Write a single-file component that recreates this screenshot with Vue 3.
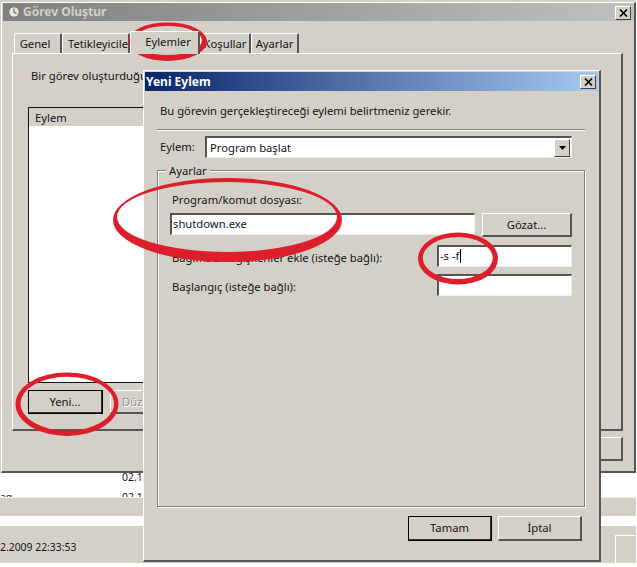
<script setup>
const tabs = [
  { label: 'Genel', cls: 'w-genel' },
  { label: 'Tetikleyiciler', cls: 'w-tetik' },
  { label: 'Eylemler', cls: 'w-eylem active' },
  { label: 'Koşullar', cls: 'w-kosul' },
  { label: 'Ayarlar', cls: 'w-ayar' }
]

const ring = ([cx, cy, rx, ry]) =>
  `M${cx - rx} ${cy}a${rx} ${ry} 0 1 0 ${2 * rx} 0a${rx} ${ry} 0 1 0 ${-2 * rx} 0Z`

// hand-drawn marks: outer and inner ellipse, slightly off-centre for an uneven stroke
const marks = [
  [[167.5, 41.7, 39.5, 19.3], [167.5, 40.5, 34.5, 14.5]],
  [[227.5, 220, 114.5, 42], [227, 217, 110, 35]],
  [[458, 258.5, 40, 26], [457.7, 258, 35, 21]],
  [[67, 404.2, 51.5, 31.8], [67.3, 403.7, 46.7, 27]]
].map(([outer, inner]) => ring(outer) + ring(inner))
</script>

<template>
  <div class="page">
    <div class="screen">
      <!-- application behind the windows -->
      <div class="back">
        <div class="rows">
          <div class="row"><span class="cell-name"></span><span class="cell-date">02.12.2009</span></div>
          <div class="row"><span class="cell-name">ag</span><span class="cell-date">02.12.2009</span></div>
        </div>
        <div class="strip"></div>
        <div class="whitebar"></div>
        <div class="status">
          <span class="stamp">2.2009 22:33:53</span>
          <div class="corner-btn"></div>
        </div>
      </div>

      <!-- Görev Oluştur window -->
      <section class="win outer">
        <header class="title grey">
          <svg class="clock" width="12" height="12" viewBox="0 0 12 12">
            <circle cx="6" cy="6" r="5.2" fill="#e9e6dc" stroke="#77756d" stroke-width="1" />
            <path d="M6 2.6V6.2L8.6 7.6" fill="none" stroke="#7a6a3a" stroke-width="1.2" />
          </svg>
          <span class="title-text dim">Görev Oluştur</span>
          <span class="x-btn outer-x">
            <svg width="9" height="8" viewBox="0 0 9 8"><path d="M1 0.5L8 7.5M8 0.5L1 7.5" stroke="#000" stroke-width="1.6" /></svg>
          </span>
        </header>
        <nav class="tabs">
          <span v-for="t in tabs" :key="t.label" class="tab" :class="t.cls">{{ t.label }}</span>
        </nav>
        <div class="panel">
          <p class="panel-text">Bir görev oluşturduğunuzda</p>
          <div class="list">
            <div class="list-head">Eylem</div>
          </div>
          <div class="list-btns">
            <span class="btn default yeni">Yeni...</span>
            <span class="btn duz">Düz</span>
          </div>
        </div>
        <div class="outer-foot">
          <span class="btn outer-cancel"></span>
        </div>
      </section>

      <!-- Yeni Eylem dialog -->
      <section class="win dialog">
        <header class="title blue">
          <span class="title-text">Yeni Eylem</span>
          <span class="x-btn">
            <svg width="9" height="8" viewBox="0 0 9 8"><path d="M1 0.5L8 7.5M8 0.5L1 7.5" stroke="#000" stroke-width="1.6" /></svg>
          </span>
        </header>
        <p class="intro">Bu görevin gerçekleştireceği eylemi belirtmeniz gerekir.</p>
        <div class="sep"></div>
        <div class="action-row">
          <span class="action-label">Eylem:</span>
          <div class="combo">
            <span class="combo-text">Program başlat</span>
            <span class="combo-arrow">
              <svg width="7" height="4" viewBox="0 0 7 4"><path d="M0 0H7L3.5 4Z" fill="#000" /></svg>
            </span>
          </div>
        </div>
        <div class="group">
          <span class="legend">Ayarlar</span>
          <div class="lbl lbl-program">Program/komut dosyası:</div>
          <div class="program-row">
            <div class="input program-input">shutdown.exe</div>
            <span class="btn gozat">Gözat...</span>
          </div>
          <div class="opt-row first">
            <span class="lbl">Bağımsız değişkenler ekle (isteğe bağlı):</span>
            <div class="input opt-input">-s -f<i class="caret"></i></div>
          </div>
          <div class="opt-row second">
            <span class="lbl">Başlangıç (isteğe bağlı):</span>
            <div class="input opt-input"></div>
          </div>
        </div>
        <div class="dialog-foot">
          <span class="btn default foot-btn">Tamam</span>
          <span class="btn foot-btn">İptal</span>
        </div>
      </section>

      <!-- hand-drawn red marks -->
      <svg class="marks" width="636" height="563" viewBox="0 0 636 563">
        <path v-for="(d, i) in marks" :key="i" :d="d" fill="#dc1f2b" fill-rule="evenodd" />
      </svg>
    </div>
  </div>
</template>

<style scoped>
.page {
  width: 637px;
  height: 567px;
  background: #fff;
  overflow: hidden;
  font-family: "Noto Sans", "Liberation Sans", sans-serif;
  font-size: 11.25px;
  line-height: 16px;
  color: #141414;
}
.screen {
  position: relative;
  width: 636px;
  height: 563px;
  background: #d4d0c8;
  overflow: hidden;
}

/* background application */
.back {
  display: flex;
  flex-direction: column;
  height: 100%;
  padding-top: 473px;
  box-sizing: border-box;
}
.rows {
  height: 24px;
  background: #fff;
  overflow: hidden;
  font-size: 10.4px;
}
.row {
  display: flex;
  height: 20px;
}
.row:first-child {
  margin-top: -4px;
}
.cell-name {
  width: 122px;
}
.cell-date {
  white-space: nowrap;
}
.strip {
  height: 18px;
  border-top: 1px solid #f4f2ee;
}
.whitebar {
  height: 10px;
  background: #fff;
}
.status {
  flex: 1;
  display: flex;
  justify-content: space-between;
}
.stamp {
  margin-top: 13px;
  font-size: 10.4px;
}
.corner-btn {
  width: 20px;
  margin-top: 9px;
  border-top: 1px solid #fff;
  border-left: 1px solid #fff;
}

/* window chrome */
.win {
  position: absolute;
  box-sizing: border-box;
  display: flex;
  flex-direction: column;
  background: #d4d0c8;
  border-top: 1px solid #fff;
  border-left: 1px solid #fff;
  border-right: 2px solid #555;
  border-bottom: 2px solid #555;
}
.outer {
  left: 1px;
  top: 2px;
  width: 635px;
  height: 471px;
  padding: 0 0 0 1px;
}
.dialog {
  left: 143px;
  top: 70px;
  width: 458px;
  height: 492px;
  padding: 1px 1px 0;
}
.title {
  display: flex;
  align-items: center;
  flex: none;
  height: 18px;
  padding: 0 3px 0 1px;
}
.grey {
  background: linear-gradient(90deg, #808080, #c0c0c0);
  padding-left: 5px;
  padding-right: 3px;
}
.blue {
  height: 19px;
  background: linear-gradient(90deg, #0a246a, #a6caf0);
  padding-right: 2px;
}
.title-text {
  flex: 1;
  font-weight: 700;
  color: #fff;
  font-size: 12px;
}
.title-text.dim {
  color: #d4d0c8;
  margin-left: 3px;
}
.x-btn {
  flex: none;
  display: flex;
  align-items: center;
  justify-content: center;
  width: 16px;
  height: 14px;
  background: #d4d0c8;
  box-sizing: border-box;
  border-top: 1px solid #fff;
  border-left: 1px solid #fff;
  border-right: 1px solid #404040;
  border-bottom: 1px solid #404040;
}
.outer-x {
  margin-top: 1px;
}

/* tabs */
.tabs {
  display: flex;
  align-items: flex-end;
  height: 32px;
  padding-left: 11px;
  flex: none;
}
.tab {
  box-sizing: border-box;
  height: 20px;
  line-height: 20px;
  text-align: center;
  background: #d4d0c8;
  border-top: 1px solid #fff;
  border-left: 1px solid #fff;
  border-right: 2px solid #555;
  border-radius: 2px 2px 0 0;
  white-space: nowrap;
  overflow: hidden;
}
.tab.active {
  height: 23px;
  margin-bottom: -1px;
  padding-left: 7px;
  position: relative;
  z-index: 1;
}
.w-genel { width: 48px; padding-right: 5px; }
.w-tetik { width: 68px; padding-left: 5px; text-align: left; }
.w-eylem { width: 70px; }
.w-kosul { width: 51px; }
.w-ayar { width: 48px; }

.panel {
  box-sizing: border-box;
  width: 611px;
  height: 378px;
  margin-left: 9px;
  padding: 14px 15px 0;
  border-top: 1px solid #fff;
  border-left: 1px solid #fff;
  border-right: 2px solid #555;
  border-bottom: 2px solid #555;
  flex: none;
}
.panel-text {
  width: 112px;
  margin: 0 0 0 3px;
  white-space: nowrap;
  overflow: hidden;
}
.list {
  box-sizing: border-box;
  width: 450px;
  height: 276px;
  margin-top: 23px;
  background: #fff;
  border: 1px solid #111;
}
.list-head {
  box-sizing: border-box;
  height: 18px;
  padding: 2px 0 0 6px;
  background: #d4d0c8;
}
.list-btns {
  display: flex;
  gap: 7px;
  margin-top: 7px;
}
.yeni { width: 75px; }
.btn.duz {
  width: 33px;
  padding-left: 11px;
  justify-content: flex-start;
  border-right: 0;
  color: #9a978f;
  text-shadow: 1px 1px 0 #fff;
}
.outer-foot {
  display: flex;
  justify-content: flex-end;
  padding: 6px 11px 0 0;
}
.outer-cancel { width: 84px; }

/* buttons */
.btn {
  box-sizing: border-box;
  display: flex;
  align-items: center;
  justify-content: center;
  height: 24px;
  background: #d4d0c8;
  border-top: 1px solid #fff;
  border-left: 1px solid #fff;
  border-right: 2px solid #555;
  border-bottom: 2px solid #555;
}
.btn.default {
  outline: 1px solid #000;
  outline-offset: -1px;
  border-right-color: #333;
  border-bottom-color: #333;
}

/* dialog content */
.intro {
  margin: 12px 0 0 15px;
}
.sep {
  width: 428px;
  height: 1px;
  margin: 10px 0 0 12px;
  background: #808080;
  border-bottom: 1px solid #fff;
  flex: none;
}
.action-row {
  display: flex;
  align-items: center;
  margin-top: 5px;
}
.action-label {
  width: 45px;
  margin-left: 15px;
}
.combo {
  box-sizing: border-box;
  display: flex;
  align-items: center;
  justify-content: space-between;
  width: 367px;
  height: 22px;
  padding: 0 1px 0 3px;
  background: #fff;
  border-top: 2px solid #555;
  border-left: 2px solid #555;
  border-right: 1px solid #eee;
  border-bottom: 1px solid #eee;
}
.combo-arrow {
  box-sizing: border-box;
  display: flex;
  align-items: center;
  justify-content: center;
  width: 16px;
  height: 18px;
  background: #d4d0c8;
  border-top: 1px solid #fff;
  border-left: 1px solid #fff;
  border-right: 1px solid #404040;
  border-bottom: 1px solid #404040;
}
.group {
  position: relative;
  box-sizing: border-box;
  width: 428px;
  height: 337px;
  margin: 12px 0 0 12px;
  padding: 21px 12px 0 14px;
  border: 1px solid #808080;
  box-shadow: 1px 1px 0 #fff, inset 1px 1px 0 #fff;
  flex: none;
}
.legend {
  position: absolute;
  left: 8px;
  top: -8px;
  padding: 0 3px;
  background: #d4d0c8;
}
.lbl {
  white-space: nowrap;
}
.program-row {
  display: flex;
  gap: 7px;
  margin: 5px 0 0 -2px;
}
.input {
  box-sizing: border-box;
  height: 22px;
  line-height: 18px;
  padding-left: 1px;
  background: #fff;
  border-top: 2px solid #555;
  border-left: 2px solid #555;
  border-right: 1px solid #eee;
  border-bottom: 1px solid #eee;
}
.program-input { width: 305px; }
.gozat { width: 90px; }
.opt-row {
  display: flex;
  justify-content: space-between;
  align-items: center;
}
.opt-row.first { margin-top: 8px; }
.opt-row.second { margin-top: 7px; }
.opt-row .lbl { position: relative; top: 2px; }
.opt-input { width: 135px; }
.caret {
  display: inline-block;
  width: 1px;
  height: 14px;
  margin-left: 1px;
  background: #000;
  vertical-align: -3px;
}
.dialog-foot {
  display: flex;
  justify-content: flex-end;
  gap: 6px;
  margin: 9px 16px 0 0;
}
.foot-btn { width: 84px; height: 25px; }

.marks {
  position: absolute;
  left: 0;
  top: 0;
  pointer-events: none;
}
</style>
